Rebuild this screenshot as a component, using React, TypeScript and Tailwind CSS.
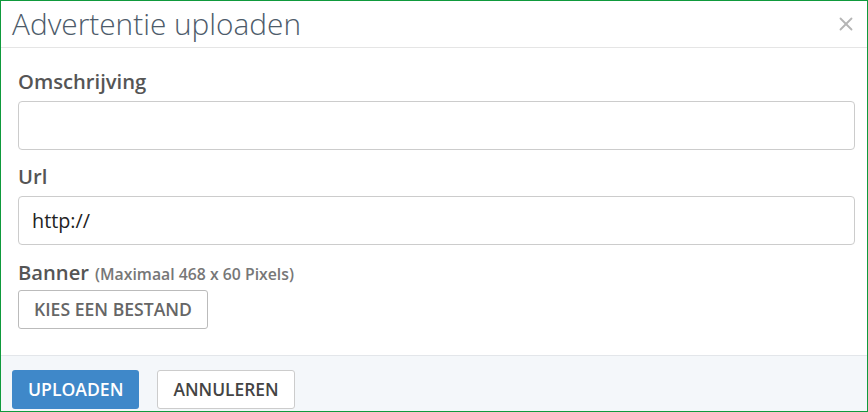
import { X } from 'lucide-react'

const font = { fontFamily: '"Open Sans", "Liberation Sans", sans-serif' }

export default function App() {
  return (
    <div
      style={font}
      className="flex h-[412px] w-[868px] flex-col border border-[#0f9a3c] bg-white text-[#555]"
    >
      <div className="flex h-[47px] shrink-0 items-center justify-between border-b border-[#e5e5e5] pl-[11px] pr-[10px]">
        <h1 className="text-[29.8px] font-light leading-none text-[#4d5b6a]">Advertentie uploaden</h1>
        <X className="h-[22px] w-[22px] text-[#b5b5b5]" strokeWidth={2} />
      </div>

      <div className="flex flex-1 flex-col pl-[17px] pr-[12px] pt-[21px]">
        <label className="text-[20.2px] font-semibold leading-[24px] text-[#555]">Omschrijving</label>
        <input className="mt-[8px] h-[49px] w-full rounded-[4px] border border-[#ccc] px-[13px] text-[19.8px] outline-none" />

        <label className="mt-[14px] text-[20.2px] font-semibold leading-[24px] text-[#555]">Url</label>
        <input
          defaultValue="http://"
          className="mt-[8px] h-[49px] w-full rounded-[4px] border border-[#ccc] px-[13px] text-[19.8px] text-[#222] outline-none"
        />

        <div className="mt-[15px] flex items-baseline gap-[6px] leading-[24px]">
          <span className="text-[20.2px] font-semibold text-[#555]">Banner</span>
          <span className="text-[15.8px] font-semibold text-[#777]">(Maximaal 468 x 60 Pixels)</span>
        </div>
        <div className="mt-[4px]">
          <button className="h-[39px] rounded-[3px] border border-[#bbb] bg-white px-[15px] text-[17.6px] font-semibold text-[#666]">
            KIES EEN BESTAND
          </button>
        </div>
      </div>

      <div className="flex h-[56px] shrink-0 items-start gap-[18px] border-t border-[#e3e6ea] bg-[#f4f7fa] pl-[11px] pt-[14px]">
        <button className="h-[39px] rounded-[3px] bg-[#3f88c9] px-[16px] text-[17.6px] font-semibold text-white">
          UPLOADEN
        </button>
        <button className="h-[39px] rounded-[3px] border border-[#ccc] bg-white px-[15px] text-[17.4px] font-semibold text-[#444]">
          ANNULEREN
        </button>
      </div>
    </div>
  )
}
